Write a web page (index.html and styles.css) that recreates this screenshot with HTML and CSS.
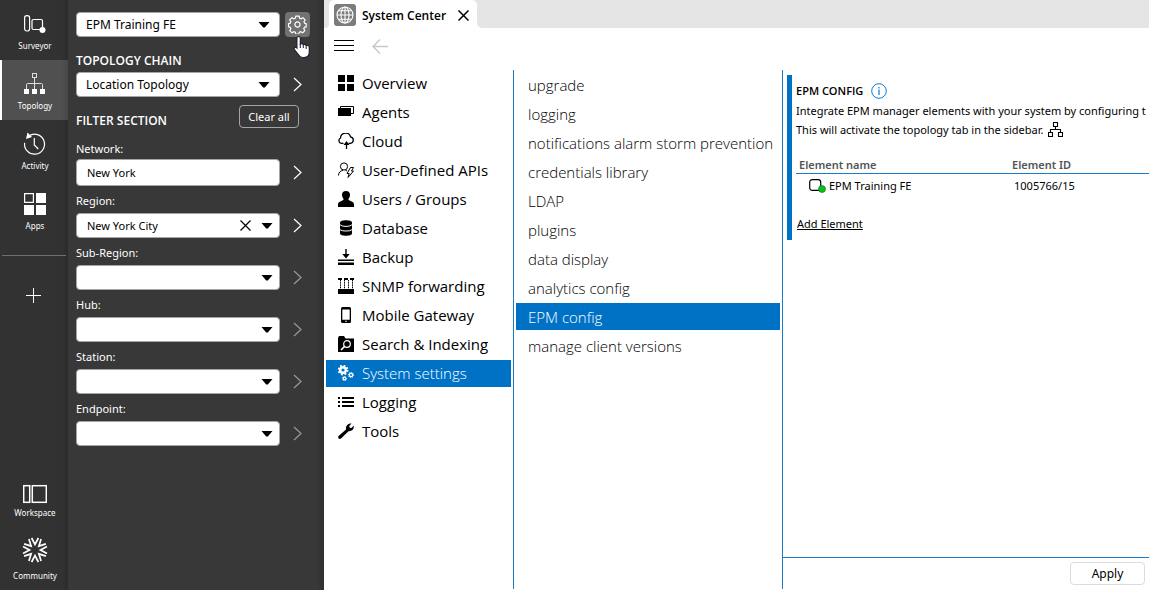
FILE: index.html
```html
<!DOCTYPE html>
<html lang="en">
<head>
<meta charset="utf-8">
<meta name="viewport" content="width=device-width, initial-scale=1">
<title>System Center</title>
<link rel="stylesheet" href="styles.css">
</head>
<body>
<div class="app">
  <nav class="rail" aria-label="Sidebar">
    <button class="rail-item" type="button">
      <svg class="rail-icon" viewBox="0 0 24 24"><g fill="none" stroke="#fff" stroke-width="1.2"><rect x="1.6" y="3.6" width="5" height="15.4" rx="2.2"/><path d="M18 17.5h-7.500a1.500 1.500 0 0 1-1.500-1.500V9a1.500 1.500 0 0 1 1.500-1.500h7.500a1.500 1.500 0 0 1 1.500 1.500v7"/></g><circle cx="19.500" cy="18" r="3" fill="#fff"/></svg>
      <span>Surveyor</span>
    </button>
    <button class="rail-item rail-item-active" type="button">
      <svg class="rail-icon" viewBox="0 0 24 24"><g fill="none" stroke="#ddd"><rect x="9.500" y="1.500" width="4" height="4"/><path d="M11.500 6v11M3.500 17v-4.500a1 1 0 0 1 1-1h14a1 1 0 0 1 1 1V17"/></g><path fill="#fff" d="M1 17h5v5H1zM9 17h5v5H9zM17 17h5v5h-5z"/></svg>
      <span>Topology</span>
    </button>
    <button class="rail-item" type="button">
      <svg class="rail-icon" viewBox="0 0 24 24"><g fill="none" stroke="#fff" stroke-width="1.200"><path d="M6 3.800a10 10 0 1 1-4.400 7"/><path d="M11.300 6v7l4 4"/></g><path fill="#fff" d="M4.500 0.500L9 5 3 7z"/></svg>
      <span>Activity</span>
    </button>
    <button class="rail-item" type="button">
      <svg class="rail-icon" viewBox="0 0 24 24"><path fill="none" stroke="#fff" stroke-width="1.200" d="M1.600 1.600h8.800v8.800H1.600z"/><path fill="#fff" d="M13 1h10v10H13zM1 13h10v10H1zM13 13h10v10H13z"/></svg>
      <span>Apps</span>
    </button>
    <hr class="rail-rule">
    <button class="rail-add" type="button" aria-label="Add">
      <svg width="16" height="16" viewBox="0 0 16 16"><path d="M7.500 0v15M0 7.500h15" stroke="#fff"/></svg>
    </button>
    <div class="rail-bottom">
      <button class="rail-item rail-item-workspace" type="button">
        <svg class="rail-icon" viewBox="0 0 24 24"><g fill="none" stroke="#fff" stroke-width="1.500"><rect x="0.700" y="3.700" width="6" height="16.600"/><rect x="9.300" y="3.700" width="14" height="16.600"/></g></svg>
        <span>Workspace</span>
      </button>
      <button class="rail-item rail-item-community" type="button">
        <svg width="26" height="26" viewBox="-13 -13 26 26"><defs><path id="ray" d="M-3.400-12L0-5.500 3.400-12"/></defs><g fill="none" stroke="#fff" stroke-width="1.700"><use href="#ray"/><use href="#ray" transform="rotate(45)"/><use href="#ray" transform="rotate(90)"/><use href="#ray" transform="rotate(135)"/><use href="#ray" transform="rotate(180)"/><use href="#ray" transform="rotate(225)"/><use href="#ray" transform="rotate(270)"/><use href="#ray" transform="rotate(315)"/></g></svg>
        <span>Community</span>
      </button>
    </div>
  </nav>

  <aside class="panel">
    <div class="row">
      <div class="combo">
        <select class="box" aria-label="EPM element"><option>EPM Training FE</option></select>
        <svg class="caret" viewBox="0 0 12 6"><path d="M0.500 0h11L6.800 5.500h-1.600z"/></svg>
      </div>
      <button class="gear" type="button" aria-label="Settings">
        <svg width="19" height="19" viewBox="-9.500 -9.500 19 19" fill="none" stroke="#fff" stroke-width="1.200"><path d="M-1.600-8.300h3.200l.5 2 1.500.6 1.800-1.100 2.200 2.200-1.100 1.800.6 1.500 1.600.5v3.100l-1.800.5-.6 1.500 1 1.800-2.200 2.200-1.800-1.100-1.500.6-.5 1.800h-3l-.5-1.800-1.500-.6-1.800 1.100-2.200-2.200 1-1.800-.6-1.500-1.700-.5v-3.100l1.700-.5.6-1.500-1.100-1.800 2.200-2.200 1.800 1.100 1.500-.6z"/><circle r="2.600"/></svg>
        <svg class="pointer" viewBox="0 0 18 24"><path d="M5.500 1.500c1.200 0 1.800.8 1.800 1.800V9c1-.8 2.500-.5 2.900.6 1-.6 2.400-.2 2.800.9 1.600-.7 3.300.2 3.300 2v4.500c0 3-1.500 5.500-5.300 5.500H9.500c-2 0-3-1-4-2.600L1.400 14.500c-.9-1.600.9-2.800 2.100-1.800l.4.400V3.300c0-1 .6-1.800 1.600-1.800z" fill="#fff" stroke="#1f1f35" stroke-width="1.200"/><path d="M7.300 9v4M10.300 10v3M13.200 11v3" stroke="#1f1f35" fill="none"/></svg>
      </button>
    </div>
    <h2 class="heading"><label for="chain">TOPOLOGY CHAIN</label></h2>
    <div class="row">
      <div class="combo">
        <select class="box" id="chain"><option>Location Topology</option></select>
        <svg class="caret" viewBox="0 0 12 6"><path d="M0.500 0h11L6.800 5.500h-1.600z"/></svg>
      </div>
      <button class="go" type="button" aria-label="Open chain"><svg width="9" height="15" viewBox="0 0 9 15"><path d="M1 1l7 6.500L1 14"/></svg></button>
    </div>
    <div class="row-filter">
      <h2 class="heading">FILTER SECTION</h2>
      <button class="clear" type="button">Clear all</button>
    </div>

    <label class="label" for="network">Network:</label>
    <div class="row">
      <div class="combo"><input class="box box-tall" id="network" type="text" value="New York"></div>
      <button class="go" type="button" aria-label="Open network"><svg width="9" height="15" viewBox="0 0 9 15"><path d="M1 1l7 6.500L1 14"/></svg></button>
    </div>
    <label class="label" for="region">Region:</label>
    <div class="row">
      <div class="combo">
        <select class="box box-field" id="region"><option>New York City</option></select>
        <button class="wipe" type="button" aria-label="Clear region"><svg width="11" height="11" viewBox="0 0 11 11"><path d="M.5.500l10 10M10.500.500l-10 10" stroke="#000" stroke-width="1.200"/></svg></button>
        <svg class="caret caret-near" viewBox="0 0 12 6"><path d="M0.500 0h11L6.800 5.500h-1.600z"/></svg>
      </div>
      <button class="go" type="button" aria-label="Open region"><svg width="9" height="15" viewBox="0 0 9 15"><path d="M1 1l7 6.500L1 14"/></svg></button>
    </div>
    <label class="label" for="subregion">Sub-Region:</label>
    <div class="row">
      <div class="combo"><select class="box" id="subregion"><option></option></select><svg class="caret caret-near" viewBox="0 0 12 6"><path d="M0.500 0h11L6.800 5.500h-1.600z"/></svg></div>
      <button class="go go-off" type="button" disabled aria-label="Open sub-region"><svg width="9" height="15" viewBox="0 0 9 15"><path d="M1 1l7 6.500L1 14"/></svg></button>
    </div>
    <label class="label" for="hub">Hub:</label>
    <div class="row">
      <div class="combo"><select class="box" id="hub"><option></option></select><svg class="caret caret-near" viewBox="0 0 12 6"><path d="M0.500 0h11L6.800 5.500h-1.600z"/></svg></div>
      <button class="go go-off" type="button" disabled aria-label="Open hub"><svg width="9" height="15" viewBox="0 0 9 15"><path d="M1 1l7 6.500L1 14"/></svg></button>
    </div>
    <label class="label" for="station">Station:</label>
    <div class="row">
      <div class="combo"><select class="box" id="station"><option></option></select><svg class="caret caret-near" viewBox="0 0 12 6"><path d="M0.500 0h11L6.800 5.500h-1.600z"/></svg></div>
      <button class="go go-off" type="button" disabled aria-label="Open station"><svg width="9" height="15" viewBox="0 0 9 15"><path d="M1 1l7 6.500L1 14"/></svg></button>
    </div>
    <label class="label" for="endpoint">Endpoint:</label>
    <div class="row">
      <div class="combo"><select class="box" id="endpoint"><option></option></select><svg class="caret caret-near" viewBox="0 0 12 6"><path d="M0.500 0h11L6.800 5.500h-1.600z"/></svg></div>
      <button class="go go-off" type="button" disabled aria-label="Open endpoint"><svg width="9" height="15" viewBox="0 0 9 15"><path d="M1 1l7 6.500L1 14"/></svg></button>
    </div>
  </aside>

  <main class="main">
    <header class="tabs">
      <div class="tabs-start"></div>
      <div class="tab">
        <svg width="22" height="22" viewBox="0 0 22 22"><rect width="22" height="22" rx="3" fill="#7c7c7c"/><g fill="none" stroke="#fff" stroke-width="1.100"><circle cx="11" cy="11" r="8"/><ellipse cx="11" cy="11" rx="4" ry="8"/><path d="M11 3v16M3 11h16M4.500 6.800h13M4.500 15.200h13"/></g></svg>
        <span class="tab-title">System Center</span>
        <button class="tab-close" type="button" aria-label="Close tab"><svg width="11" height="11" viewBox="0 0 11 11"><path d="M.5.500l10 10M10.500.500l-10 10" stroke="#000" stroke-width="1.500"/></svg></button>
      </div>
      <div class="tabs-rest"></div>
    </header>
    <div class="toolbar">
      <button class="tool" type="button" aria-label="Menu"><svg width="20" height="12" viewBox="0 0 20 12"><path d="M0 .5h20M0 5.500h20M0 10.500h20" stroke="#000"/></svg></button>
      <button class="tool" type="button" aria-label="Back" disabled><svg width="16" height="15" viewBox="0 0 16 15"><path d="M8 .5L1 7.500l7 7M1 7.500h15" stroke="#c8c8c8" stroke-width="1.300" fill="none"/></svg></button>
    </div>
    <div class="columns">
      <nav class="menu" aria-label="System Center">
        <a class="menu-item" href="#"><svg class="icon" viewBox="0 0 16 16"><path d="M0 0h7v7H0zM9 0h7v7H9zM0 9h7v7H0zM9 9h7v7H9z"/></svg>Overview</a>
        <a class="menu-item" href="#"><svg class="icon" viewBox="0 0 16 16"><path d="M0 4h13v8H0z"/><path d="M2.500 4V2.500h13v7H13" fill="none" stroke="#000"/></svg>Agents</a>
        <a class="menu-item" href="#"><svg class="icon" viewBox="0 0 16 16"><path d="M5.500 10.300H3.500A2.800 2.800 0 0 1 2.500 5 5.200 5.200 0 0 1 12.700 4a3.200 3.200 0 0 1-.2 6.300h-2" fill="none" stroke="#000" stroke-width="1.300"/><path d="M8.500 16V11" stroke="#000" stroke-width="1.300"/><path d="M5.500 12l3-4 3 4z"/></svg>Cloud</a>
        <a class="menu-item" href="#"><svg class="icon" viewBox="0 0 16 16"><g fill="none" stroke="#000"><circle cx="6" cy="4.500" r="3.600"/><path d="M.5 13.500c0-3 2-4.700 4.500-5.300M7.500 8.300l1.500.7M12.500 5.500h3l-2 3.500h2L10 15.500l1.200-4H9z"/></g></svg>User-Defined APIs</a>
        <a class="menu-item" href="#"><svg class="icon" viewBox="0 0 16 16"><path d="M8 0c2.600 0 4 1.500 4 3.800S11 7 10.400 8.300c-.3 1.800 5.600 1.600 5.600 5.200V16H0v-2.500c0-3.600 5.900-3.400 5.600-5.200C5 7 4 6 4 3.800S5.400 0 8 0z"/></svg>Users / Groups</a>
        <a class="menu-item" href="#"><svg class="icon" viewBox="0 0 16 16"><path d="M2 2.500C2-.5 14-.5 14 2.500v11c0 3-12 3-12 0z"/><path d="M2 4.500c1.500 2.500 10.500 2.500 12 0M2 9.500c1.500 2 10.500 2 12 0" fill="none" stroke="#fff"/></svg>Database</a>
        <a class="menu-item" href="#"><svg class="icon" viewBox="0 0 16 16"><path d="M7.300 0h1.400v5h3L8 9.500 4.300 5h3zM0 10.500h16v1.500H0zM0 13.500h16v2.500H0z"/></svg>Backup</a>
        <a class="menu-item" href="#"><svg class="icon" viewBox="0 0 16 16"><path d="M0 0h4v2H0zM6 0h4v2H6zM12 0h4v2h-4zM0 11h16v5H0z"/><path d="M2.500 2v9M6.500 2v9M10.500 2v9M14.500 2v9" stroke="#000" stroke-dasharray="1.500 .7"/></svg>SNMP forwarding</a>
        <a class="menu-item" href="#"><svg class="icon" viewBox="0 0 16 16"><path fill-rule="evenodd" d="M4.500 0h7A1.500 1.500 0 0 1 13 1.500v13a1.500 1.500 0 0 1-1.500 1.500h-7A1.500 1.500 0 0 1 3 14.500v-13A1.500 1.500 0 0 1 4.500 0zM4.300 2.500v10.200h7.400V2.500zM7.200 13.800v1h1.600v-1z"/></svg>Mobile Gateway</a>
        <a class="menu-item" href="#"><svg class="icon" viewBox="0 0 16 16"><path d="M0 2l1-2h5l1.500 2.500H16V16H0z"/><g fill="none" stroke="#fff"><circle cx="9" cy="8" r="3.300" stroke-width="1.200"/><path d="M6.500 10.500L3 14" stroke-width="1.700"/></g></svg>Search &amp; Indexing</a>
        <a class="menu-item menu-item-active" href="#"><svg class="icon" viewBox="0 0 16 16"><g fill="none" stroke="#fff"><circle cx="5" cy="5" r="2.800" stroke-width="2.400"/><circle cx="5" cy="5" r="4.500" stroke-width="1.800" stroke-dasharray="1.770 1.770"/><circle cx="13" cy="10" r="1.700" stroke-width="1.300"/><circle cx="13" cy="10" r="2.600" stroke-width="1" stroke-dasharray="1.020 1.020"/><circle cx="6.500" cy="13.500" r="1.300" stroke-width="1.200"/><circle cx="6.500" cy="13.500" r="2.100" stroke-width="1" stroke-dasharray=".82 .82"/></g></svg>System settings</a>
        <a class="menu-item" href="#"><svg class="icon" viewBox="0 0 16 16"><path d="M0 3h2v2H0zM4 3h12v2H4zM0 7h2v2H0zM4 7h12v2H4zM0 11h2v2H0zM4 11h12v2H4z"/></svg>Logging</a>
        <a class="menu-item" href="#"><svg class="icon" viewBox="0 0 16 16"><path d="M.6 13.100L8 6.500C7.500 3 10 .2 13.500.6L11.300 3l.4 1.700 1.700.3 2.300-2.300c.8 3.300-2 6-5.200 5.500L3 15.500c-1.500 1.300-3.800-.9-2.400-2.400z"/></svg>Tools</a>
      </nav>
      <nav class="submenu" aria-label="System settings">
        <a class="submenu-item" href="#">upgrade</a>
        <a class="submenu-item" href="#">logging</a>
        <a class="submenu-item" href="#">notifications alarm storm prevention</a>
        <a class="submenu-item" href="#">credentials library</a>
        <a class="submenu-item" href="#">LDAP</a>
        <a class="submenu-item" href="#">plugins</a>
        <a class="submenu-item" href="#">data display</a>
        <a class="submenu-item" href="#">analytics config</a>
        <a class="submenu-item submenu-item-active" href="#">EPM config</a>
        <a class="submenu-item" href="#">manage client versions</a>
      </nav>
      <section class="detail">
        <div class="card">
          <h1 class="card-title">EPM CONFIG
            <svg width="16" height="16" viewBox="0 0 16 16"><circle cx="8" cy="8" r="7.300" fill="none" stroke="#0a7cd0"/><path d="M8 4v1.500M8 6.500V12" stroke="#0a7cd0" stroke-width="1.200"/></svg>
          </h1>
          <p class="line">Integrate EPM manager elements with your system by configuring t</p>
          <p class="line">This will activate the topology tab in the sidebar.
            <svg width="15" height="15" viewBox="0 0 15 15" fill="none" stroke="#000" stroke-width="1.100"><path d="M5.500.5h4v4h-4zM.5 10.500h4v4h-4zM10.500 10.500h4v4h-4zM7.500 4.500v3M2.500 10.500v-3h10v3"/></svg>
          </p>
          <table class="table">
            <thead><tr><th class="col-name">Element name</th><th>Element ID</th></tr></thead>
            <tbody><tr>
              <td class="col-name"><span class="element"><svg width="18" height="14" viewBox="0 0 18 14"><rect x=".7" y=".7" width="11" height="10.600" rx="2.500" fill="#fff" stroke="#000" stroke-width="1.200"/><circle cx="13" cy="10" r="3.500" fill="#0fbf0f" stroke="#064" stroke-width=".6"/></svg>EPM Training FE</span></td>
              <td>1005766/15</td>
            </tr></tbody>
          </table>
          <a class="add" href="#">Add Element</a>
        </div>
        <footer class="actions"><button class="apply" type="button">Apply</button></footer>
      </section>
    </div>
  </main>
</div>
</body>
</html>
```
FILE: styles.css
```css
* { box-sizing: border-box; }
body { margin: 0; font-family: "Noto Sans", "Open Sans", sans-serif; font-size: 12px; color: #000; }
button { font: inherit; color: inherit; background: none; border: 0; padding: 0; margin: 0; }
a { color: inherit; text-decoration: none; }
svg { display: block; flex: none; }
h1, h2, p { margin: 0; }
.app { display: flex; height: 100vh; background: #fff; overflow: hidden; }

.rail { flex: 0 0 68px; display: flex; flex-direction: column; color: #fff; background: linear-gradient(90deg, #323232 62px, #2b2b2b 68px); }
.rail-item { display: flex; flex-direction: column; align-items: center; gap: 4px; height: 60px; padding: 12px 0 0 2px; font-size: 8px; line-height: 12px; }
.rail-item-active { background: linear-gradient(90deg, #505050 62px, #474747 68px); box-shadow: inset 2px 0 0 #fff; }
.rail-icon { width: 24px; height: 24px; }
.rail-rule { width: 64px; margin: 15px 2px 0; border: 0; border-top: 1px solid #6e6e6e; }
.rail-add { align-self: center; margin-top: 32px; }
.rail-bottom { display: flex; flex-direction: column; margin-top: auto; padding-bottom: 8px; }
.rail-item-workspace { gap: 1px; height: 59px; }
.rail-item-community { padding-top: 8px; gap: 7px; height: 53px; }

.panel { flex: 0 0 256px; padding: 12px 14px 0 8px; color: #fff; background: linear-gradient(90deg, #383838 248px, #303030 256px); }
.row { display: flex; align-items: center; gap: 5px; }
.combo { display: grid; flex: 1; align-items: center; }
.combo > * { grid-area: 1 / 1; }
.box { appearance: none; width: 100%; height: 25px; padding: 0 8px 0 9px; border: 1px solid #a5a5a5; border-radius: 4px; background: #fff; color: #000; font: inherit; font-size: 12px; }
.box-tall { height: 27px; font-size: 11px; padding-left: 10px; }
.box-field { font-size: 11px; padding-left: 10px; }
.caret { width: 12px; height: 6px; margin-right: 10px; justify-self: end; pointer-events: none; }
.caret-near { margin-right: 7px; }
.wipe { justify-self: end; margin-right: 29px; }
.gear { position: relative; display: grid; place-items: center; width: 25px; height: 25px; border-radius: 4px; background: #727272; }
.pointer { position: absolute; left: 8px; top: 23px; width: 18px; height: 24px; }
.go { display: grid; place-items: center; width: 25px; height: 25px; }
.go path { fill: none; stroke: #fff; stroke-width: 1.2; }
.go-off path { stroke: #999; }
.heading { padding-top: 12px; font-family: "Open Sans", "Noto Sans", sans-serif; font-size: 12px; font-weight: 600; line-height: 23px; }
.row-filter { display: flex; align-items: flex-start; justify-content: space-between; padding-right: 11px; height: 37px; }
.clear { width: 60px; height: 23px; margin-top: 8px; border: 1px solid #a5a5a5; border-radius: 4px; font-size: 11px; }
.label { display: block; height: 27px; padding-top: 2px; font-size: 11px; line-height: 25px; }
.row-filter + .label { height: 25px; }

.main { flex: 1; min-width: 0; display: flex; flex-direction: column; padding: 0 1px 1px 0; }
.tabs { display: flex; height: 28px; }
.tabs-start { width: 5px; background: #e5e5e5; border-bottom-right-radius: 4px; }
.tab { display: flex; align-items: center; gap: 6px; width: 148px; padding: 2px 8px 0 5px; border-radius: 5px 5px 0 0; background: #fff; box-shadow: 0 -4px 0 #e5e5e5; }
.tab-title { font-family: "Open Sans", "Noto Sans", sans-serif; font-size: 12px; font-weight: 600; }
.tab-close { margin-left: auto; }
.tabs-rest { flex: 1; background: #e5e5e5; border-bottom-left-radius: 5px; }
.toolbar { display: flex; align-items: center; gap: 18px; height: 36px; padding-left: 10px; }
.columns { flex: 1; display: flex; min-height: 0; padding-top: 6px; }

.menu, .submenu { font-family: "Open Sans", "Noto Sans", sans-serif; font-size: 15px; }
.menu { flex: 0 0 190px; display: flex; flex-direction: column; gap: 2px; padding: 0 2px; border-right: 1px solid #1a7cc9; }
.menu-item { display: flex; align-items: center; gap: 8px; height: 27px; padding: 0 0 2px 12px; white-space: nowrap; }
.icon { width: 16px; height: 16px; }
.menu-item-active, .submenu-item-active { color: #fff; background: #0072c6; font-weight: 300; }
.submenu { flex: 0 0 269px; display: flex; flex-direction: column; gap: 2px; padding: 1px 2px 0; border-right: 1px solid #1a7cc9; font-weight: 300; }
.submenu-item { display: flex; align-items: center; height: 27px; padding-left: 12px; white-space: nowrap; }

.detail { flex: 1; min-width: 0; display: flex; flex-direction: column; padding-top: 5px; }
.card { margin-left: 4px; padding: 5px 0 7px 4px; border-left: 5px solid #0072c6; overflow: hidden; }
.card-title { display: flex; align-items: center; gap: 8px; height: 21px; font-family: "Open Sans", "Noto Sans", sans-serif; font-size: 11px; font-weight: 600; }
.line { display: flex; align-items: center; gap: 5px; height: 19px; font-size: 11px; white-space: nowrap; }
.table { width: 100%; margin-top: 17px; border-collapse: collapse; text-align: left; }
.table th { height: 17px; padding: 1px 3px 0; border-bottom: 1px solid #1a7cc9; color: #555; font-weight: 600; font-size: 11px; line-height: 16px; }
.table td { height: 24px; padding: 0 5px; font-size: 11px; }
.col-name { width: 213px; }
.element { display: flex; align-items: center; gap: 2px; padding-left: 8px; }
.add { display: inline-block; margin: 17px 0 0 1px; font-size: 11px; line-height: 18px; text-decoration: underline; }
.actions { display: flex; justify-content: flex-end; margin-top: auto; padding: 4px 4px; border-top: 1px solid #1a7cc9; }
.apply { width: 75px; height: 23px; border: 1px solid #dcdcdc; border-radius: 4px; }
```
